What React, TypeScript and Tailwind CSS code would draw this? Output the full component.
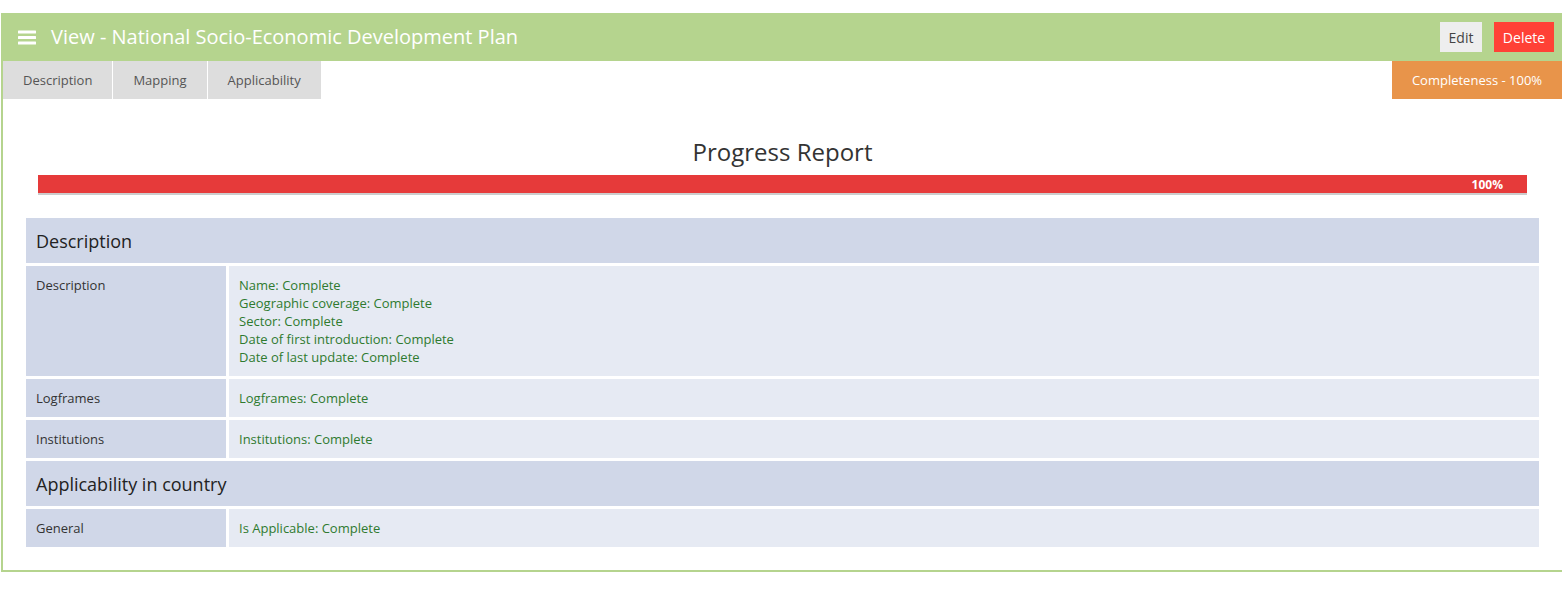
import React from "react";

const font = { fontFamily: '"Open Sans", "Noto Sans", sans-serif' };

type Row = { label: string; items: string[] };

const sections: { title: string; rows: Row[] }[] = [
  {
    title: "Description",
    rows: [
      {
        label: "Description",
        items: [
          "Name: Complete",
          "Geographic coverage: Complete",
          "Sector: Complete",
          "Date of first introduction: Complete",
          "Date of last update: Complete",
        ],
      },
      { label: "Logframes", items: ["Logframes: Complete"] },
      { label: "Institutions", items: ["Institutions: Complete"] },
    ],
  },
  {
    title: "Applicability in country",
    rows: [{ label: "General", items: ["Is Applicable: Complete"] }],
  },
];

function MenuIcon() {
  return (
    <svg width="18" height="15" viewBox="0 0 18 15" fill="#ffffff">
      <rect x="0" y="0.5" width="18" height="3" rx="0.5" />
      <rect x="0" y="6" width="18" height="3" rx="0.5" />
      <rect x="0" y="11.5" width="18" height="3" rx="0.5" />
    </svg>
  );
}

export default function App() {
  return (
    <div className="w-full overflow-hidden bg-white pt-[13px] pb-[30px]" style={font}>
      <div className="ml-[1px] w-[1563px] border-x-2 border-b-2 border-[#b5d48e]">
        {/* header */}
        <div className="-mx-[2px] flex h-[48px] items-center justify-between bg-[#b5d48e] pl-[17px] pr-[10px]">
          <div className="flex items-center gap-[15px]">
            <MenuIcon />
            <h1 className="text-[20px] leading-[28px] text-white">
              View - National Socio-Economic Development Plan
            </h1>
          </div>
          <div className="flex items-center gap-[12px]">
            <button className="h-[30px] w-[42px] bg-[#eeeeee] text-[14px] text-[#444]">
              Edit
            </button>
            <button className="h-[30px] w-[60px] bg-[#ff4136] text-[14px] text-white">
              Delete
            </button>
          </div>
        </div>

        {/* tabs */}
        <div className="flex h-[38px] items-stretch justify-between">
          <div className="flex gap-[1px]">
            {["Description", "Mapping", "Applicability"].map((t) => (
              <div
                key={t}
                className="flex items-center bg-[#dddddd] px-[20px] pt-[2px] text-[13px] text-[#555]"
              >
                {t}
              </div>
            ))}
          </div>
          <div className="flex w-[170px] items-center justify-center bg-[#e8944a] pt-[2px] text-[13px] text-white">
            Completeness - 100%
          </div>
        </div>

        {/* progress */}
        <div className="pt-[36px]">
          <h2 className="text-center text-[24px] leading-[33px] text-[#333]">
            Progress Report
          </h2>
          <div className="mx-[35px] mt-[7px] h-[20px] border-b-2 border-[#cccccc] bg-[#e63a3a] pr-[24px] pt-[1px] text-right text-[12px] font-bold leading-[18px] text-white">
            100%
          </div>
        </div>

        {/* table */}
        <div className="mx-[23px] mt-[23px] mb-[23px] flex flex-col gap-[3px]">
          {sections.map((s) => (
            <React.Fragment key={s.title}>
              <div className="bg-[#d0d7e8] px-[10px] pt-[11px] pb-[9px] text-[18px] leading-[25px] text-[#222]">
                {s.title}
              </div>
              {s.rows.map((r) => (
                <div key={r.label} className="flex gap-[3px] text-[13px] leading-[18px]">
                  <div className="w-[200px] shrink-0 bg-[#d0d7e8] p-[10px] text-[#333]">
                    {r.label}
                  </div>
                  <div className="flex-1 bg-[#e6eaf3] p-[10px] text-[#2f7a2f]">
                    {r.items.map((i) => (
                      <div key={i}>{i}</div>
                    ))}
                  </div>
                </div>
              ))}
            </React.Fragment>
          ))}
        </div>
      </div>
    </div>
  );
}
